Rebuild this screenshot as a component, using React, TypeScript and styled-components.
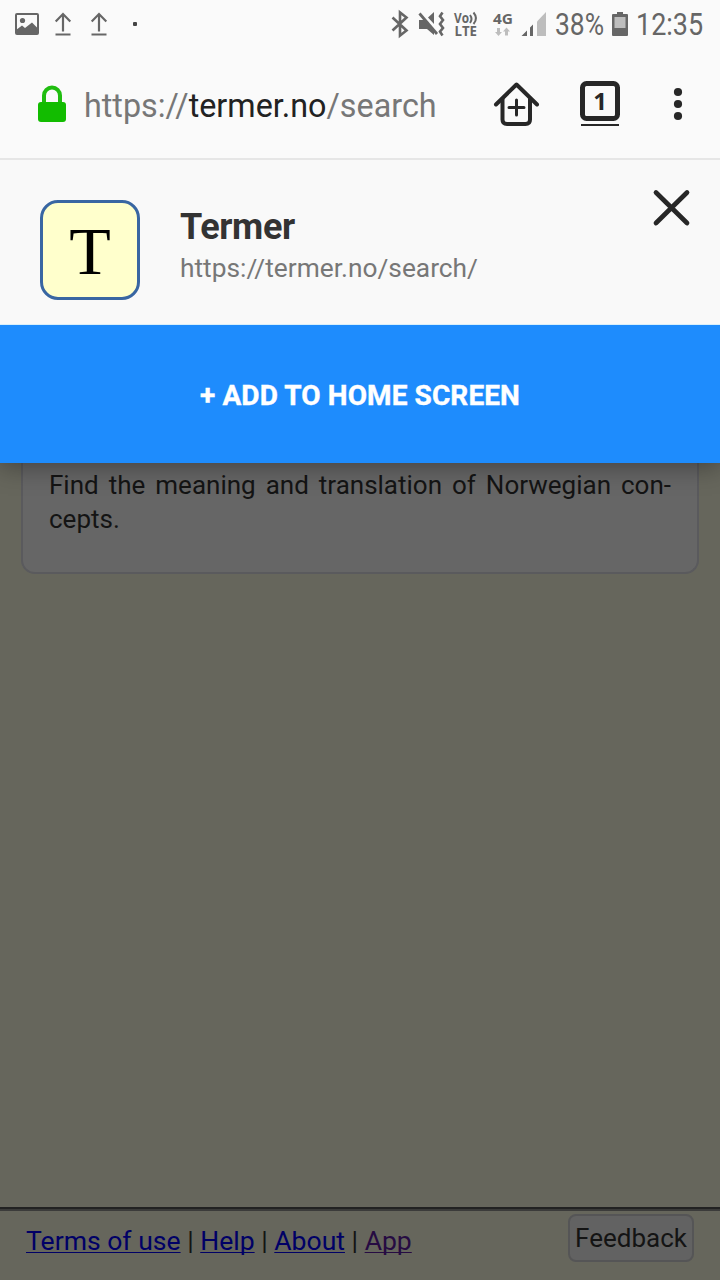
import React from 'react';
import styled, { createGlobalStyle } from 'styled-components';

const GlobalStyle = createGlobalStyle`
  * { box-sizing: border-box; }
  body { margin: 0; background: #66665c; font-family: Roboto, sans-serif; }
`;

const Screen = styled.div`
  width: 720px;
  height: 1280px;
  overflow: hidden;
  display: flex;
  flex-direction: column;
  background: #66665c;
`;

const StatusBar = styled.header`
  flex: none;
  height: 48px;
  padding: 0 17px 0 14px;
  display: flex;
  align-items: center;
  justify-content: space-between;
  background: #fafafa;
  color: #666;
`;

const StatusGroup = styled.div`
  display: flex;
  align-items: center;
  height: 48px;
`;

const Glyph = styled.svg<{ $before?: number }>`
  display: block;
  flex: none;
  overflow: visible;
  margin-left: ${(p) => p.$before ?? 0}px;
`;

const StatusText = styled.span<{ $width: number; $before: number; $squeeze: number }>`
  display: block;
  width: ${(p) => p.$width}px;
  margin-left: ${(p) => p.$before}px;
  font-size: 31.5px;
  line-height: 50px;
  padding-top: 2px;
  white-space: nowrap;
  transform: scaleX(${(p) => p.$squeeze});
  transform-origin: left center;
`;

const Toolbar = styled.nav`
  flex: none;
  height: 112px;
  padding: 2px 36px 0 36px;
  display: flex;
  align-items: center;
  background: #fafafa;
  border-bottom: 2px solid #e6e6e6;
`;

const Address = styled.div`
  width: 400px;
  margin: 3px 0 0 16px;
  font-size: 32.3px;
  line-height: 40px;
  color: #777;
  white-space: nowrap;
`;

const Host = styled.span`
  color: #222;
`;

const SitePanel = styled.section`
  flex: none;
  position: relative;
  z-index: 2;
  height: 165px;
  padding: 40px 30px 0 40px;
  display: flex;
  align-items: flex-start;
  background: #f9f9f9;
  box-shadow: inset 0 -1px 0 #d9effa;
`;

const SiteIcon = styled.div`
  width: 100px;
  height: 100px;
  border: 3px solid #3966a2;
  border-radius: 18px;
  background: #ffffcc;
  color: #000;
  font: 68px/96px 'Liberation Serif', serif;
  text-align: center;
`;

const SiteInfo = styled.div`
  flex: 1;
  margin: 5px 0 0 40px;
`;

const SiteName = styled.h1`
  margin: 0;
  font-size: 36px;
  line-height: 44px;
  font-weight: 700;
  letter-spacing: -0.4px;
  color: #333;
`;

const SiteUrl = styled.div`
  font-size: 26.3px;
  line-height: 38px;
  color: #777;
`;

const CloseButton = styled.button`
  margin: -11px 0 0;
  padding: 0;
  border: 0;
  background: none;
`;

const AddButton = styled.button`
  flex: none;
  position: relative;
  z-index: 1;
  height: 138px;
  padding: 3px 0 0;
  border: 0;
  background: #1e8cfd;
  color: #fff;
  font: 700 28px/36px Roboto, sans-serif;
  letter-spacing: 0.1px;
  -webkit-text-stroke: 0.4px #fff;
  box-shadow: 0 4px 24px rgba(0, 0, 0, 0.35);
`;

const Content = styled.main`
  flex: 1;
  padding: 0 21px;
`;

const Card = styled.article`
  height: 111px;
  padding: 5px 26px 0;
  border: 2px solid #5a5a5d;
  border-top: 0;
  border-radius: 0 0 14px 14px;
  background: #666;
  color: #141414;
  font-size: 26px;
  line-height: 34px;
`;

const Line = styled.div<{ $justify?: boolean }>`
  text-align-last: ${(p) => (p.$justify ? 'justify' : 'left')};
  white-space: nowrap;
`;

const Footer = styled.footer`
  flex: none;
  height: 73px;
  padding: 3px 26px 0;
  display: flex;
  align-items: flex-start;
  justify-content: space-between;
  border-top: 2px solid #222;
  box-shadow: inset 0 2px 0 #3b3b3a;
  color: #141414;
`;

const Links = styled.div`
  padding-top: 12px;
  font-size: 26.55px;
  line-height: 34px;
  white-space: nowrap;
`;

const Link = styled.a<{ $visited?: boolean }>`
  color: ${(p) => (p.$visited ? '#260b42' : '#000066')};
  text-decoration: underline;
  text-decoration-thickness: 1px;
  text-underline-offset: 2px;
  text-decoration-skip-ink: none;
`;

const Feedback = styled.button`
  width: 126px;
  height: 48px;
  margin-top: 2px;
  padding: 0;
  border: 2px solid #555556;
  border-radius: 8px;
  background: #626262;
  color: #141414;
  font: 26px/40px Roboto, sans-serif;
`;

const UploadIcon = ({ before }: { before: number }) => (
  <Glyph width="18" height="26" viewBox="54 11 18 26" fill="none" stroke="#666" strokeWidth="2.2" $before={before}>
    <path d="M63 31.5V14M55.7 21.5L63 14l7.3 7.5M55.5 34.5h15" />
  </Glyph>
);

export default function App() {
  return (
    <Screen>
      <GlobalStyle />
      <StatusBar>
        <StatusGroup>
          <Glyph width="26" height="24" viewBox="14 12 26 24">
            <rect x="16" y="14" width="22" height="20" rx="1" fill="none" stroke="#666" strokeWidth="2" />
            <circle cx="22.5" cy="20.5" r="2.6" fill="#666" />
            <path d="M16 30l6-4.5 3 2.5 7-5.5 6 6V34H16z" fill="#666" />
          </Glyph>
          <UploadIcon before={14} />
          <UploadIcon before={18} />
          <Glyph width="4" height="4" viewBox="0 0 4 4" $before={25}>
            <rect width="4" height="4" rx="1" fill="#444" />
          </Glyph>
        </StatusGroup>
        <StatusGroup>
          <Glyph width="18" height="26" viewBox="391 11 18 26" fill="none" stroke="#666" strokeWidth="2.6">
            <path d="M392.5 17.5L406.5 30.5 400 35.5V12.5L406.5 17.5 392.5 30.5" />
          </Glyph>
          <Glyph width="28" height="26" viewBox="418 11 28 26" $before={9}>
            <path d="M419 20h6l9 10v5l-7-6h-8zM428 17.5l6-5.5v12z" fill="#666" />
            <path d="M419.5 13.5L437 34" stroke="#666" strokeWidth="2.8" />
            <path d="M442.5 12.5l-2.5 3.7 3 3.8-3 4 3 4-3 3.7 2.5 3.8" fill="none" stroke="#666" strokeWidth="2.6" />
          </Glyph>
          <Glyph width="28" height="28" viewBox="453 10 28 28" $before={7} fill="#666" fontFamily="Open Sans, sans-serif" fontWeight="700">
            <text x="454" y="23" fontSize="13.5" textLength="15" lengthAdjust="spacingAndGlyphs">Vo</text>
            <path d="M470 15q3 4 0 8M473.5 12.5q5 6 0 11.5" fill="none" stroke="#666" strokeWidth="2" />
            <text x="454.5" y="36" fontSize="14" textLength="22.5" lengthAdjust="spacingAndGlyphs">LTE</text>
          </Glyph>
          <Glyph width="22" height="28" viewBox="492 10 22 28" $before={11} fontFamily="Open Sans, sans-serif" fontWeight="700">
            <text x="493" y="24" fontSize="15" fill="#666" textLength="20" lengthAdjust="spacingAndGlyphs">4G</text>
            <path d="M497 28h3v4h2l-3.5 4-3.5-4h2zM505 35.5h3v-4h2l-3.5-4-3.5 4h2z" fill="#bdbdbd" />
          </Glyph>
          <Glyph width="26" height="26" viewBox="521 11 26 26" $before={7}>
            <path d="M521.5 36l5.5-5.5V36zM530 27.5l3-3V36h-3z" fill="#666" />
            <path d="M537 21.5l9-9.5v24h-9z" fill="#bdbdbd" />
          </Glyph>
          <StatusText $before={8} $width={48} $squeeze={0.84}>38%</StatusText>
          <Glyph width="16" height="24" viewBox="612 12 16 24" $before={9}>
            <path d="M617 12h6v2h4q1 0 1 1v20q0 1-1 1h-14q-1 0-1-1V15q0-1 1-1h4z" fill="#666" />
            <rect x="614.5" y="17" width="11" height="11" fill="#bdbdbd" />
          </Glyph>
          <StatusText $before={8} $width={67} $squeeze={0.855}>12:35</StatusText>
        </StatusGroup>
      </StatusBar>

      <Toolbar>
        <Glyph width="32" height="38" viewBox="36 85 32 38">
          <path d="M44 104V95.5a8 8 0 0 1 16 0V104" fill="none" stroke="#20bd10" strokeWidth="4" />
          <rect x="38" y="102" width="28" height="20" rx="3" fill="#12bc00" />
        </Glyph>
        <Address>https://<Host>termer.no</Host>/search</Address>
        <Glyph width="48" height="46" viewBox="492 81 48 46" $before={8} fill="none" stroke="#272727" strokeWidth="4" strokeLinecap="round" strokeLinejoin="round">
          <path d="M496 104.5L516.5 84.5 537 104.5" />
          <path d="M502.5 99v20.5q0 4.5 4.5 4.5h18.5q4.5 0 4.5-4.5V99" />
          <path d="M509 107.5h15M516.5 100v15" strokeWidth="3" />
        </Glyph>
        <Glyph width="40" height="46" viewBox="580 81 40 46" $before={40}>
          <rect x="582.5" y="83.5" width="35" height="35" rx="4" fill="none" stroke="#272727" strokeWidth="5" />
          <path d="M581 125h38" stroke="#272727" strokeWidth="2" />
          <text x="600" y="110" textAnchor="middle" fontFamily="Open Sans, sans-serif" fontSize="24" fontWeight="700" fill="#272727">1</text>
        </Glyph>
        <Glyph width="10" height="34" viewBox="673 87 10 34" $before={53} fill="#272727">
          <circle cx="678" cy="92" r="4.1" />
          <circle cx="678" cy="104" r="4.1" />
          <circle cx="678" cy="116" r="4.1" />
        </Glyph>
      </Toolbar>

      <SitePanel>
        <SiteIcon>T</SiteIcon>
        <SiteInfo>
          <SiteName>Termer</SiteName>
          <SiteUrl>https://termer.no/search/</SiteUrl>
        </SiteInfo>
        <CloseButton aria-label="Close">
          <Glyph width="37" height="37" viewBox="653 189 37 37">
            <path d="M656 192.5l31 30.5M687 192.5L656 223" stroke="#272727" strokeWidth="4.7" strokeLinecap="round" />
          </Glyph>
        </CloseButton>
      </SitePanel>
      <AddButton>+ ADD TO HOME SCREEN</AddButton>

      <Content>
        <Card>
          <Line $justify>Find the meaning and translation of Norwegian con-</Line>
          <Line>cepts.</Line>
        </Card>
      </Content>

      <Footer>
        <Links>
          <Link>Terms of use</Link> | <Link>Help</Link> | <Link>About</Link> | <Link $visited>App</Link>
        </Links>
        <Feedback>Feedback</Feedback>
      </Footer>
    </Screen>
  );
}
